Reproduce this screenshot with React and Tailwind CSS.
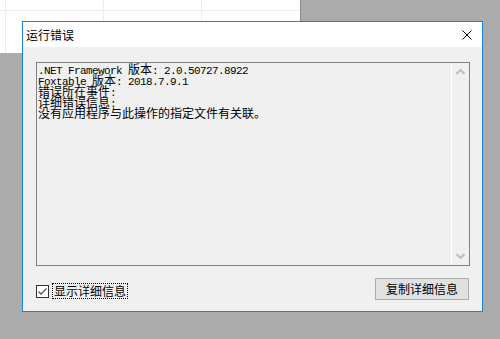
import React from "react";

const cjk = "text-[12px] tracking-normal";

function Line({ children }) {
  return <div className="h-[11px] leading-[11px] whitespace-pre">{children}</div>;
}

export default function App() {
  return (
    <div className="relative w-[500px] h-[339px] overflow-hidden bg-[#ababab]" style={{ fontFamily: '"Noto Sans CJK SC", sans-serif' }}>
      {/* spreadsheet behind the dialog */}
      <div className="w-[301px] h-[53px] bg-white border-r border-[#8a8a8a] flex flex-col">
        <div className="h-[11px] border-b border-[#ececec] flex">
          <div className="w-[6px] border-r border-[#ececec]" />
          <div className="w-[98px] border-r border-[#ececec]" />
          <div className="w-[98px] border-r border-[#ececec]" />
        </div>
        <div className="flex-1 flex">
          <div className="w-[6px] border-r border-[#ececec]" />
          <div className="w-[98px] border-r border-[#ececec]" />
          <div className="w-[98px] border-r border-[#ececec]" />
        </div>
      </div>

      {/* dialog window */}
      <div className="absolute left-[22px] top-[21px] w-[461px] h-[291px] border border-[#1883d7] bg-[#f0f0f0] flex flex-col">
        <div className="h-[25px] bg-white flex items-center justify-between pl-[3px] pr-[10px]">
          <span className="text-[12px] text-black leading-none">运行错误</span>
          <svg width="10" height="10" viewBox="0 0 10 10" className="mt-[1px]">
            <path d="M0.5 0.5 L9.5 9.5 M9.5 0.5 L0.5 9.5" stroke="#000" strokeWidth="1" />
          </svg>
        </div>

        <div className="flex-1 flex flex-col pl-[13px] pr-[13px] pt-[15px]">
          <div className="w-[434px] h-[204px] border border-[#828282] flex">
            <div className="flex-1 pl-[1px] pt-[3px] text-black text-[11px] tracking-[-0.6px]" style={{ fontFamily: '"Liberation Mono", "Noto Sans CJK SC", monospace' }}>
              <Line>.NET Framework <span className={cjk}>版本</span>: 2.0.50727.8922</Line>
              <Line>Foxtable <span className={cjk}>版本</span>: 2018.7.9.1</Line>
              <Line><span className={cjk}>错误所在事件</span>:</Line>
              <Line><span className={cjk}>详细错误信息</span>:</Line>
              <Line><span className={cjk}>没有应用程序与此操作的指定文件有关联。</span></Line>
            </div>
            <div className="w-[18px] border-l border-white flex flex-col justify-between items-center py-[6px]">
              <svg width="9" height="6" viewBox="0 0 9 6">
                <path d="M0.5 5 L4.5 1 L8.5 5" fill="none" stroke="#bdbdbd" strokeWidth="2" />
              </svg>
              <svg width="9" height="6" viewBox="0 0 9 6">
                <path d="M0.5 1 L4.5 5 L8.5 1" fill="none" stroke="#bdbdbd" strokeWidth="2" />
              </svg>
            </div>
          </div>

          <div className="flex items-center justify-between mt-[12px]">
            <div className="flex items-center mt-[4px]">
              <div className="w-[13px] h-[13px] border border-[#333] bg-white flex items-center justify-center">
                <svg width="9" height="7" viewBox="0 0 9 7">
                  <path d="M0.5 3.5 L3 6 L8.5 0.5" fill="none" stroke="#555" strokeWidth="1.3" />
                </svg>
              </div>
              <span className="ml-[3px] px-[1px] text-[12px] leading-[14px] text-black border border-dotted border-black">显示详细信息</span>
            </div>
            <button className="w-[94px] h-[22px] bg-[#e1e1e1] border border-[#adadad] text-[12px] text-black leading-none flex items-center justify-center">
              复制详细信息
            </button>
          </div>
        </div>
      </div>
    </div>
  );
}
